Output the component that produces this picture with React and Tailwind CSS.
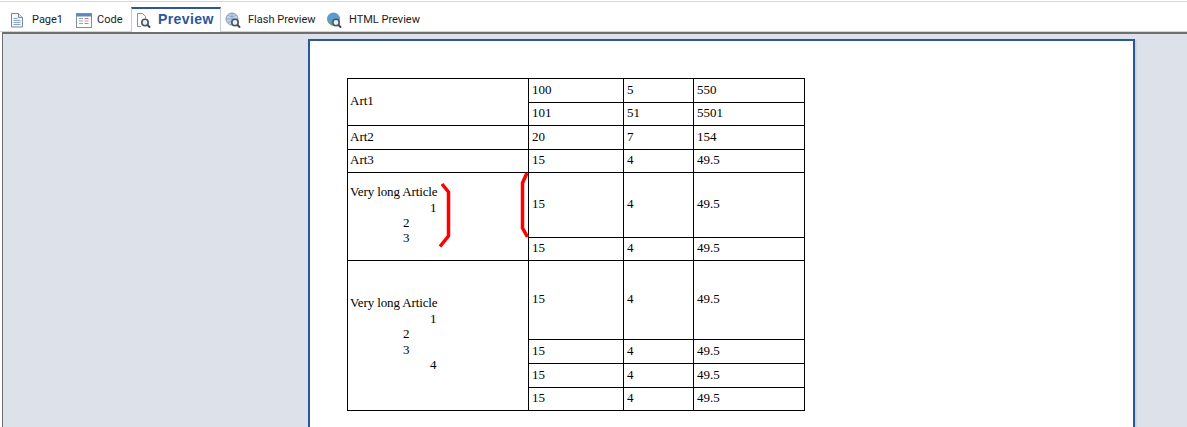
const rows = [
  { h: 24, a: "Art1", span: 2, v: ["100", "5", "550"] },
  { h: 23, v: ["101", "51", "5501"] },
  { h: 24, a: "Art2", span: 1, v: ["20", "7", "154"] },
  { h: 23, a: "Art3", span: 1, v: ["15", "4", "49.5"] },
  { h: 65, long: 3, span: 2, v: ["15", "4", "49.5"] },
  { h: 23, v: ["15", "4", "49.5"] },
  { h: 79, long: 4, span: 4, v: ["15", "4", "49.5"] },
  { h: 24, v: ["15", "4", "49.5"] },
  { h: 24, v: ["15", "4", "49.5"] },
  { h: 23, v: ["15", "4", "49.5"] },
];

function LongCell({ n }) {
  return (
    <div className="leading-[15.4px]">
      <div className="tracking-[-0.12px]">Very long Article</div>
      <div className="pl-[80px]">1</div>
      <div className="pl-[53px]">2</div>
      <div className="pl-[53px]">3</div>
      {n === 4 && <div className="pl-[80px]">4</div>}
    </div>
  );
}

function DocIcon() {
  return (
    <svg width="16" height="16" viewBox="0 0 16 16" fill="none">
      <path d="M1.5 1.500h7l4 4v9.500h-11z" fill="#f4f7fb" stroke="#75879f" />
      <path d="M8.500 1.500v4h4" fill="#dfe6f0" stroke="#75879f" />
      <path d="M3.500 6.500h4M3.500 8.500h7M3.500 10.500h7M3.500 12.500h7" stroke="#8aa2c4" />
    </svg>
  );
}

function CodeIcon() {
  return (
    <svg width="16" height="16" viewBox="0 0 16 16" fill="none">
      <rect x="0.5" y="1.500" width="15" height="14" fill="#fff" stroke="#7f8ea3" />
      <rect x="1" y="2" width="14" height="2.500" fill="#5f86c0" />
      <path d="M3 6.500h4M3 9h4M3 11.500h4" stroke="#9aa5b5" />
      <path d="M8.500 6.500h4M8.500 11.500h4" stroke="#e0785a" />
      <path d="M8.500 9h4" stroke="#9aa5b5" />
    </svg>
  );
}

function Glass() {
  return (
    <>
      <circle cx="10" cy="10.500" r="3.200" fill="#e8eef5" stroke="#4a5460" strokeWidth="1.600" />
      <path d="M12.500 13l2.600 2.600" stroke="#3d4650" strokeWidth="2" />
    </>
  );
}

function PreviewIcon() {
  return (
    <svg width="16" height="16" viewBox="0 0 16 16" fill="none">
      <path d="M2.500 1.500h5l3 3v2M6 14.500H2.500v-13" stroke="#8a8f96" fill="#fff" />
      <Glass />
    </svg>
  );
}

function FlashIcon() {
  return (
    <svg width="16" height="16" viewBox="0 0 16 16" fill="none">
      <circle cx="7" cy="7" r="6" fill="#c4d3e6" stroke="#7f9cc0" />
      <path d="M1 7h12M7 1v12M3 3c2 2 6 2 8 0M3 11c2-2 6-2 8 0" stroke="#7f9cc0" strokeWidth="0.800" />
      <Glass />
    </svg>
  );
}

function HtmlIcon() {
  return (
    <svg width="16" height="16" viewBox="0 0 16 16" fill="none">
      <circle cx="7.500" cy="7" r="6.500" fill="#5b9bd5" />
      <path d="M1.500 9c2 3 3 4 5 5l-1-5z" fill="#6fa84f" />
      <Glass />
    </svg>
  );
}

function Tab({ icon, label, className }) {
  return (
    <div className={"flex h-full items-center " + className}>
      {icon}
      <span>{label}</span>
    </div>
  );
}

export default function App() {
  return (
    <div className="flex h-[427px] w-[1187px] flex-col overflow-hidden bg-white font-['Roboto',sans-serif] text-[11px] text-[#1c1c1c]">
      <div className="mt-[1px] h-[1px] shrink-0 bg-[#d6d6d6]" />
      <div className="flex h-[30px] shrink-0 items-end border-b border-[#d4d4d4] pl-[10px]">
        <div className="flex h-[22px] items-center">
          <Tab icon={<DocIcon />} label="Page1" className="w-[66px] gap-[6px]" />
          <Tab icon={<CodeIcon />} label="Code" className="w-[55px] gap-[5px]" />
        </div>
        <div className="-mb-[1px] flex h-[25px] w-[90px] items-center gap-[7px] border-x border-t-2 border-x-[#c8ccd2] border-t-[#2b579a] bg-white pb-[2px] pl-[3px] font-['Liberation_Sans',sans-serif] text-[14px] font-bold tracking-[0.4px] text-[#2b579a]">
          <PreviewIcon />
          <span>Preview</span>
        </div>
        <div className="flex h-[22px] items-center pl-[4px]">
          <Tab icon={<FlashIcon />} label="Flash Preview" className="w-[101px] gap-[7px]" />
          <Tab icon={<HtmlIcon />} label="HTML Preview" className="gap-[7px]" />
        </div>
      </div>
      <div className="ml-[2px] flex min-h-0 flex-1 border-t-2 border-l border-t-[#6f6f6f] border-l-[#6f6f6f] bg-[#dde1e9]">
        <div className="w-[305px] shrink-0" />
        <div className="mt-[5px] h-[500px] w-[827px] shrink-0 border-2 border-[#2b579a] bg-white pt-[37px] pl-[37px] shadow-[1px_1px_2px_#c3c7cf]">
          <table className="table-fixed border-collapse font-['Liberation_Serif',serif] text-[13px] leading-[15px] text-black">
            <colgroup>
              <col className="w-[181px]" />
              <col className="w-[95px]" />
              <col className="w-[70px]" />
              <col className="w-[111px]" />
            </colgroup>
            <tbody>
              {rows.map((r, i) => (
                <tr key={i} style={{ height: r.h }}>
                  {r.span && (
                    <td rowSpan={r.span} className="border border-black px-[2px] pt-0 pb-[3px] align-middle">
                      {r.long ? <LongCell n={r.long} /> : r.a}
                    </td>
                  )}
                  {r.v.map((c, j) => (
                    <td key={j} className="border border-black px-[3px] pt-0 pb-[3px] align-middle">
                      {c}
                    </td>
                  ))}
                </tr>
              ))}
            </tbody>
          </table>
        </div>
      </div>
      <svg className="pointer-events-none absolute top-0 left-0" width="1187" height="427" fill="none">
        <path d="M442 184l6.500 8v44l-8.500 10.500" stroke="#ff0000" strokeWidth="3.500" />
        <path d="M527 173l-4.500 10v45l5 9" stroke="#ff0000" strokeWidth="3.500" />
      </svg>
    </div>
  );
}
